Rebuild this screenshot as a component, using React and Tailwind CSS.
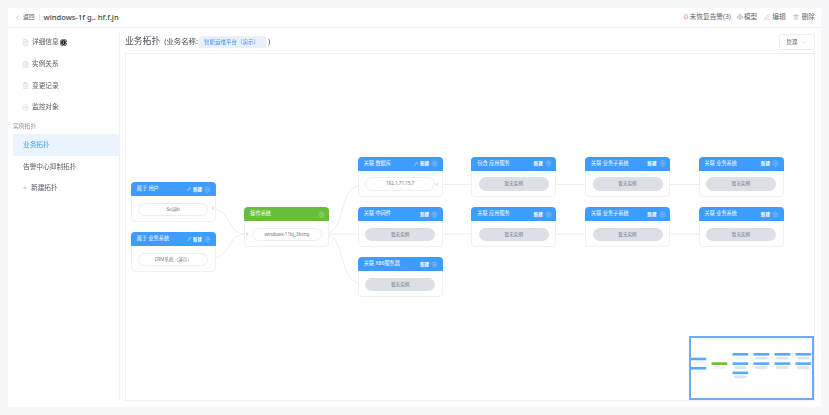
import React from "react";
import {
  ChevronLeft,
  ChevronDown,
  FileText,
  ClipboardList,
  CircleGauge,
  Plus,
  Pencil,
  Settings,
  Bell,
  Globe,
  PenLine,
  Trash2,
  Info,
} from "lucide-react";

const EMPTY = "暂无实例";

// node positions are page coords, the canvas starts at 126,54
const NODES = [
  { x: 130.7, y: 182, title: "属于 用户", item: "Su词ki", edit: true },
  { x: 130.7, y: 232, title: "属于 业务系统", item: "CRM系统（演示）", edit: true },
  { x: 244.3, y: 207, title: "操作系统", item: "windows-11bj_3kvnq", green: true },
  { x: 357.7, y: 156.7, title: "关联 数据库", item: "192.1.71.15.7", edit: true },
  { x: 357.7, y: 207, title: "关联 中间件" },
  { x: 357.7, y: 257, title: "关联 X86服务器" },
  { x: 471.3, y: 156.7, title: "包含 应用服务" },
  { x: 471.3, y: 207, title: "关联 应用服务" },
  { x: 585, y: 156.7, title: "关联 业务子系统" },
  { x: 585, y: 207, title: "关联 业务子系统" },
  { x: 698.5, y: 156.7, title: "关联 业务系统" },
  { x: 698.5, y: 207, title: "关联 业务系统" },
];

const EDGES = [
  "M211 208.5 C232 208.5 226 234 246 234",
  "M208 259 C232 259 226 234 246 234",
  "M322 234 C350 234 334 184.5 365 184.5",
  "M322 234 L365 234",
  "M322 234 C350 234 334 284 365 284",
  "M438 184.5 L478 184.5",
  "M435 234 L478 234",
  "M549 184.5 L592 184.5",
  "M549 234 L592 234",
  "M662 184.5 L706 184.5",
  "M662 234 L706 234",
];

// little grey arrow heads where an edge enters a pill
const ARROWS = ["M211 208.5 L214 206.5 L214 210.5 Z", "M249 234 L246 232 L246 236 Z", "M435 184.5 L438 182.5 L438 186.5 Z"];

function NavItem({ icon: Icon, children, active, extra }) {
  return (
    <div
      className={`flex h-[21.7px] items-center gap-[1px] text-[6.7px] ${
        active ? "bg-[#eaf3ff] pl-[10px] text-[#3f9cff]" : "pl-[9px] text-[#555b66]"
      }`}
    >
      {Icon && <Icon size={7} strokeWidth={1} className="mr-[2px] text-[#9aa0a8]" />}
      <span>{children}</span>
      {extra}
    </div>
  );
}

function TopologyNode({ node }) {
  const { x, y, title, item, edit, green } = node;
  return (
    <div
      className="absolute h-[40px] w-[85px] rounded-[4px] border border-[#eef0f3] bg-white"
      style={{ left: x - 126, top: y - 54 }}
    >
      <div
        className={`-mx-px -mt-px flex h-[14px] items-center justify-between rounded-t-[4px] pl-[6px] pr-[4.5px] text-[5.2px] text-white ${
          green ? "bg-[#67bd3c]" : "bg-[#3f9cff]"
        }`}
      >
        <span>{title}</span>
        <span className="flex items-center gap-[2px]">
          {edit && <Pencil size={4} strokeWidth={2} />}
          {!green && <span className="text-[4.6px] font-semibold">新建</span>}
          <Settings size={7} strokeWidth={1} className="opacity-80" />
        </span>
      </div>
      <div
        className={`mx-[6.5px] mt-[6.5px] flex h-[13.5px] items-center justify-center rounded-full text-[4.6px] ${
          item
            ? "border border-[#eceef1] bg-white text-[#70757d]"
            : "bg-[#dcdfe6] text-[#70757d]"
        }`}
      >
        {item || EMPTY}
      </div>
    </div>
  );
}

function MiniMap() {
  const mx = (x) => -0.5 + (x - 130.7) * 0.185;
  const my = (y) => 15 + (y - 156.7) * 0.185;
  return (
    <div className="absolute right-0 bottom-0 h-[64px] w-[125.5px] border-2 border-[#6eaaf8] bg-white">
      <svg width="122" height="60" className="block">
        {NODES.map((n) => (
          <g key={`${n.x}-${n.y}`}>
            <rect
              x={mx(n.x)}
              y={my(n.y)}
              width="15.7"
              height="2.6"
              fill={n.green ? "#67bd3c" : "#5aa9fb"}
            />
            <rect
              x={mx(n.x) + 1.5}
              y={my(n.y) + 4}
              width="12.7"
              height="2.6"
              rx="1.3"
              fill={n.item ? "#f3f4f6" : "#e1e3e9"}
            />
          </g>
        ))}
      </svg>
    </div>
  );
}

export default function App() {
  return (
    <div className="h-[415px] w-[829px] overflow-hidden bg-[#f5f7fa] p-2 font-['Noto_Sans','Noto_Sans_CJK_SC',sans-serif]">
      <div className="flex h-[399px] w-[813px] flex-col rounded-[2px] bg-white blur-[0.3px]">
        <header className="flex h-[19.5px] shrink-0 items-center justify-between border-b border-[#f0f1f3] pl-[6px] pr-[6px]">
          <div className="flex items-center">
            <ChevronLeft size={7} strokeWidth={1} className="text-[#555b66]" />
            <span className="ml-[2px] text-[5.8px] text-[#555b66]">返回</span>
            <span className="mx-[4px] h-[7px] w-px bg-[#e3e5e8]" />
            <span className="text-[7.6px] font-medium text-[#3d424b]">windows-1f g.. hf.f.jn</span>
          </div>
          <div className="flex items-center text-[6.7px] text-[#60656e]">
            <Bell size={6} strokeWidth={2} className="mr-[1px] text-[#f0575a]" />
            <span>未恢复告警(3)</span>
            <Globe size={6} strokeWidth={1} className="ml-[6px] mr-[1px]" />
            <span>模型</span>
            <PenLine size={6} strokeWidth={1} className="ml-[7px] mr-[2px]" />
            <span>编辑</span>
            <Trash2 size={6} strokeWidth={1} className="ml-[7px] mr-[3px]" />
            <span>删除</span>
          </div>
        </header>

        <div className="flex min-h-0 flex-1 pt-[3.5px]">
          <aside className="mb-[6.5px] ml-[5px] w-[106.5px] shrink-0 border-r border-[#eef0f3]">
            <div className="pt-[0.5px]">
              <NavItem
                icon={FileText}
                extra={
                  <Info
                    size={7}
                    strokeWidth={2}
                    className="rounded-full bg-[#222] text-white"
                  />
                }
              >
                详细信息
              </NavItem>
              <NavItem icon={FileText}>实例关系</NavItem>
              <NavItem icon={ClipboardList}>变更记录</NavItem>
              <NavItem icon={CircleGauge}>监控对象</NavItem>
            </div>
            <div className="flex h-[16px] items-center text-[5.8px] text-[#8e939b]">实例拓扑</div>
            <NavItem active>业务拓扑</NavItem>
            <div className="flex h-[21.7px] items-center pl-[10px] text-[6.7px] text-[#555b66]">
              告警中心抑制拓扑
            </div>
            <div className="flex h-[21.7px] items-center gap-[3px] pl-[9px] text-[6.7px] text-[#555b66]">
              <Plus size={6} strokeWidth={1} />
              新建拓扑
            </div>
          </aside>

          <main className="flex min-w-0 flex-1 flex-col pl-[5.5px] pr-[6px]">
            <div className="flex h-[22px] shrink-0 items-center">
              <span className="text-[8.8px] text-[#4a4f58]">业务拓扑</span>
              <span className="ml-[4px] text-[7.4px] text-[#4a4f58]">(业务名称:</span>
              <span className="ml-[1px] flex h-[12px] w-[67px] items-center rounded-[2px] bg-[#e8f0fe] pl-[5px] text-[5.5px] text-[#4a8df0]">
                智能运维平台（演示）
              </span>
              <span className="ml-[2px] text-[7px] text-[#4a4f58]">)</span>
              <button className="ml-auto flex h-[16px] w-[36px] items-center justify-center gap-[3px] rounded-[2px] border border-[#eceef1] text-[5.5px] text-[#60656e]">
                管理
                <ChevronDown size={7} strokeWidth={1} className="text-[#9aa0a8]" />
              </button>
            </div>

            <div className="relative mb-[6px] min-h-0 flex-1 border border-[#eef0f3] bg-white">
              <svg width="690" height="348" className="absolute top-0 left-0">
                <g transform="translate(-126 -54)" fill="none" stroke="#eceef1" strokeWidth="1">
                  {EDGES.map((d) => (
                    <path key={d} d={d} />
                  ))}
                </g>
              </svg>
              {NODES.map((n) => (
                <TopologyNode key={`${n.x}-${n.y}`} node={n} />
              ))}
              <svg width="690" height="348" className="pointer-events-none absolute top-0 left-0">
                <g transform="translate(-126 -54)" fill="#dfe2e6">
                  {ARROWS.map((d) => (
                    <path key={d} d={d} />
                  ))}
                </g>
              </svg>
              <MiniMap />
            </div>
          </main>
        </div>
      </div>
    </div>
  );
}
